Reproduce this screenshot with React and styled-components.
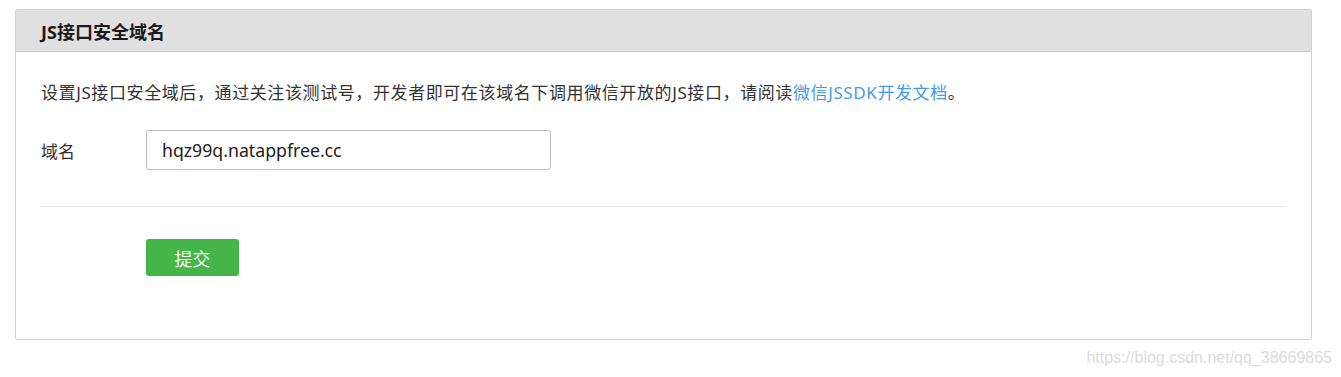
import React from "react";
import styled, { createGlobalStyle } from "styled-components";

const GlobalStyle = createGlobalStyle`
  body {
    margin: 0;
    background: #fff;
    font-family: "Noto Sans", "Noto Sans CJK SC", sans-serif;
    color: #222;
  }
`;

export default function App() {
  return (
    <>
      <GlobalStyle />
      <Page>
        <Panel>
          <PanelHeader>
            <HeaderTitle>JS接口安全域名</HeaderTitle>
          </PanelHeader>
          <PanelBody>
            <Description>
              设置JS接口安全域后，通过关注该测试号，开发者即可在该域名下调用微信开放的JS接口，请阅读
              <DocLink href="#">微信JSSDK开发文档</DocLink>。
            </Description>
            <FormRow>
              <FieldLabel>域名</FieldLabel>
              <TextInput defaultValue="hqz99q.natappfree.cc" />
            </FormRow>
            <Divider />
            <ActionRow>
              <SubmitButton>提交</SubmitButton>
            </ActionRow>
          </PanelBody>
        </Panel>
        <Watermark>https://blog.csdn.net/qq_38669865</Watermark>
      </Page>
    </>
  );
}

const Page = styled.div`
  padding: 9px 29px 0 15px;
  height: 377px;
  box-sizing: border-box;
  display: flex;
  flex-direction: column;
`;

const Panel = styled.div`
  border: 1px solid #d3d3d3;
  border-radius: 2px;
  background: #fff;
`;

const PanelHeader = styled.div`
  height: 41px;
  background: #e0e0e0;
  border-bottom: 1px solid #c8c8c8;
  display: flex;
  align-items: center;
  padding-left: 25px;
`;

const HeaderTitle = styled.h2`
  margin: 0;
  font-size: 18px;
  font-weight: 700;
  color: #1a1a1a;
`;

const PanelBody = styled.div`
  padding: 29px 25px 63px 25px;
`;

const Description = styled.p`
  margin: 0;
  font-size: 17px;
  letter-spacing: 0.6px;
  line-height: 24px;
  color: #333;
`;

const DocLink = styled.a`
  color: #459ae9;
  text-decoration: none;
`;

const FormRow = styled.div`
  display: flex;
  align-items: center;
  margin-top: 25px;
`;

const FieldLabel = styled.label`
  width: 105px;
  font-size: 17px;
  color: #333;
`;

const TextInput = styled.input`
  width: 405px;
  height: 40px;
  box-sizing: border-box;
  border: 1px solid #bdbdbd;
  border-radius: 3px;
  padding: 0 15px;
  font-family: "Noto Sans", sans-serif;
  font-size: 17.7px;
  color: #222;
  outline: none;
`;

const Divider = styled.hr`
  margin: 36px 0 0;
  border: 0;
  border-top: 1px solid #e4e4e4;
`;

const ActionRow = styled.div`
  padding-left: 105px;
  margin-top: 32px;
`;

const SubmitButton = styled.button`
  width: 93px;
  height: 37px;
  border: 0;
  border-radius: 3px;
  background: #44b549;
  color: #fff;
  font-family: "Noto Sans CJK SC", sans-serif;
  font-size: 18px;
  cursor: pointer;
`;

const Watermark = styled.div`
  align-self: flex-end;
  margin-top: 9px;
  margin-right: -20px;
  font-family: "Liberation Sans", sans-serif;
  font-size: 16px;
  color: #dcdcdc;
`;
